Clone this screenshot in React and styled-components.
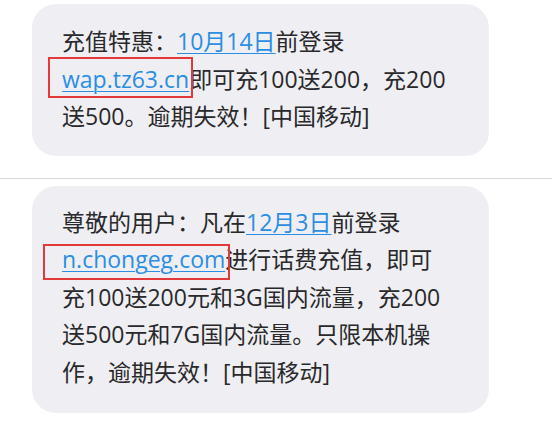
import React from "react";
import styled, { createGlobalStyle } from "styled-components";

const GlobalStyle = createGlobalStyle`
  html, body {
    margin: 0;
    padding: 0;
    background: #ffffff;
  }
  body {
    font-family: "Open Sans", "Noto Sans CJK SC", sans-serif;
  }
`;

const Page = styled.div`
  width: 552px;
  height: 423px;
  overflow: hidden;
  display: flex;
  flex-direction: column;
  padding-top: 4px;
  box-sizing: border-box;
`;

const Row = styled.div`
  display: flex;
  padding-left: 32px;
  padding-bottom: ${({ bottom }) => bottom || 0}px;
`;

const Divider = styled.div`
  height: 1px;
  background: #d9d9dc;
  margin-bottom: 7px;
`;

const Bubble = styled.div`
  width: 457px;
  box-sizing: border-box;
  background: #efeff3;
  border-radius: 24px;
  padding: ${({ pad }) => pad};
  color: #29292b;
  font-size: 23px;
  line-height: 37.5px;
  white-space: nowrap;
`;

const Line = styled.div`
  display: block;
`;

const Link = styled.span`
  color: #2a8ee4;
  text-decoration: underline;
  text-decoration-thickness: 1px;
  text-underline-offset: 3px;
`;

const Marked = styled.span`
  position: relative;

  &::after {
    content: "";
    position: absolute;
    left: ${({ l }) => -l}px;
    right: ${({ r }) => -r}px;
    top: ${({ t }) => t}px;
    bottom: ${({ b }) => b}px;
    border: 2px solid #e5383b;
    pointer-events: none;
  }
`;

export default function App() {
  return (
    <>
      <GlobalStyle />
      <Page>
        <Row bottom={22}>
          <Bubble pad="19px 20px 20px 30px">
            <Line>
              充值特惠：<Link>10月14日</Link>前登录
            </Line>
            <Line>
              <Marked l={14} r={4} t={-6} b={-3}>
                <Link>wap.tz63.cn</Link>
              </Marked>
              即可充100送200，充200
            </Line>
            <Line>送500。逾期失效！[中国移动]</Line>
          </Bubble>
        </Row>
        <Divider />
        <Row>
          <Bubble pad="18px 20px 22px 30px">
            <Line>
              尊敬的用户：凡在<Link>12月3日</Link>前登录
            </Line>
            <Line>
              <Marked l={19} r={5} t={1} b={-5}>
                <Link>n.chongeg.com</Link>
              </Marked>
              进行话费充值，即可
            </Line>
            <Line>充100送200元和3G国内流量，充200</Line>
            <Line>送500元和7G国内流量。只限本机操</Line>
            <Line>作，逾期失效！[中国移动]</Line>
          </Bubble>
        </Row>
      </Page>
    </>
  );
}
